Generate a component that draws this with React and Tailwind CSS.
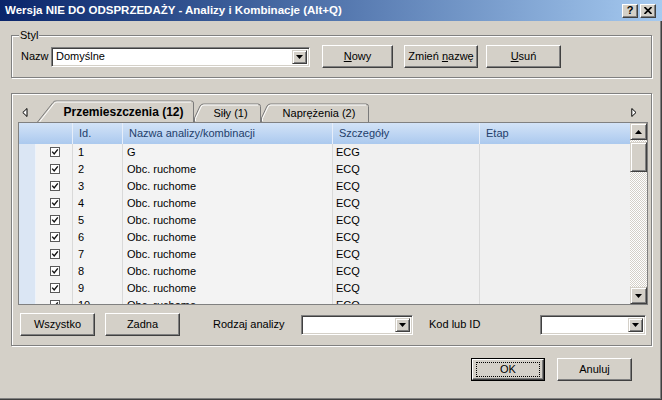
import React from "react";

const F = "font-['Liberation_Sans',Arial,sans-serif]";

function Btn({ children, className = "" }) {
  return (
    <div
      className={`flex items-center justify-center h-[23px] bg-[#d4d0c8] border border-t-white border-l-white border-r-[#404040] border-b-[#404040] shadow-[inset_-1px_-1px_0_#808080] text-[11px] text-black shrink-0 ${className}`}
    >
      {children}
    </div>
  );
}

function DownTri() {
  return (
    <svg width="7" height="4" viewBox="0 0 7 4">
      <path d="M0 0 H7 L3.5 4 Z" fill="#000" />
    </svg>
  );
}

function Combo({ className = "", text = "" }) {
  return (
    <div
      className={`flex items-stretch h-[20px] bg-white border border-t-[#808080] border-l-[#808080] border-r-white border-b-white shadow-[inset_1px_1px_0_#404040,inset_-1px_-1px_0_#d4d0c8] p-[2px] shrink-0 ${className}`}
    >
      <div className="flex-1 flex items-center pl-[2px] text-[11px] text-black whitespace-nowrap overflow-hidden">
        {text}
      </div>
      <div className="w-[15px] flex items-center justify-center bg-[#d4d0c8] border border-t-[#d4d0c8] border-l-[#d4d0c8] border-r-[#404040] border-b-[#404040] shadow-[inset_1px_1px_0_#fff,inset_-1px_-1px_0_#808080]">
        <DownTri />
      </div>
    </div>
  );
}

function TitleBtn({ children, className = "" }) {
  return (
    <div
      className={`w-[16px] h-[14px] flex items-center justify-center bg-[#d4d0c8] border border-t-white border-l-white border-r-[#404040] border-b-[#404040] shadow-[inset_-1px_-1px_0_#808080] ${className}`}
    >
      {children}
    </div>
  );
}

function Check() {
  return (
    <svg width="10" height="10" viewBox="0 0 10 10">
      <rect x="0.5" y="0.5" width="9" height="9" fill="#fff" stroke="#5a5a5a" />
      <path d="M2.2 4.6 L4.2 7 L7.8 2.4" fill="none" stroke="#111" strokeWidth="1.4" />
    </svg>
  );
}

const rows = [
  ["1", "G", "ECG"],
  ["2", "Obc. ruchome", "ECQ"],
  ["3", "Obc. ruchome", "ECQ"],
  ["4", "Obc. ruchome", "ECQ"],
  ["5", "Obc. ruchome", "ECQ"],
  ["6", "Obc. ruchome", "ECQ"],
  ["7", "Obc. ruchome", "ECQ"],
  ["8", "Obc. ruchome", "ECQ"],
  ["9", "Obc. ruchome", "ECQ"],
  ["10", "Obc. ruchome", "ECQ"],
];

const COLS = "grid grid-cols-[17px_37px_50px_210px_147px_150px]";

function Table() {
  return (
    <div className="ml-[6px] w-[630px] h-[183px] border border-[#808080] flex bg-white">
      <div className="w-[611px] flex flex-col overflow-hidden">
        <div className={`${COLS} h-[21px] shrink-0 bg-linear-to-b from-[#d3e3f7] to-[#abc9ee] text-[#23406b] text-[11px]`}>
          <div />
          <div className="border-r border-[#e6eefa]" />
          <div className="border-r border-[#e6eefa] flex items-center pl-[6px]">Id.</div>
          <div className="border-r border-[#e6eefa] flex items-center pl-[6px]">Nazwa analizy/kombinacji</div>
          <div className="border-r border-[#e6eefa] flex items-center pl-[6px]">Szczegóły</div>
          <div className="flex items-center pl-[6px]">Etap</div>
        </div>
        {rows.map((r) => (
          <div key={r[0]} className={`${COLS} h-[17px] shrink-0 text-[11px] text-black`}>
            <div className="bg-[#dbe6f4] border-b border-[#c7d6ea] border-r border-r-[#eef3fa]" />
            <div className="bg-[#f3f3f3] border-b border-[#d4d4d4] border-r border-r-[#d9d9d9] flex items-center justify-center pl-[1px]">
              <Check />
            </div>
            <div className="bg-[#f3f3f3] border-b border-[#d4d4d4] border-r border-r-[#d9d9d9] flex items-center pl-[5px]">{r[0]}</div>
            <div className="bg-[#f3f3f3] border-b border-[#d4d4d4] border-r border-r-[#d9d9d9] flex items-center pl-[4px] whitespace-nowrap">{r[1]}</div>
            <div className="bg-[#f0f0f0] border-b border-[#d4d4d4] border-r border-r-[#d9d9d9] flex items-center pl-[3px]">{r[2]}</div>
            <div className="bg-[#f0f0f0] border-b border-[#d4d4d4]" />
          </div>
        ))}
      </div>
      <div className="w-[17px] flex flex-col bg-[repeating-conic-gradient(#d4d0c8_0_25%,#ffffff_0_50%)] bg-[length:2px_2px]">
        <div className="h-[17px] shrink-0 flex items-center justify-center bg-[#d4d0c8] border border-t-[#d4d0c8] border-l-[#d4d0c8] border-r-[#404040] border-b-[#404040] shadow-[inset_1px_1px_0_#fff,inset_-1px_-1px_0_#808080]">
          <svg width="7" height="4" viewBox="0 0 7 4">
            <path d="M0 4 H7 L3.5 0 Z" fill="#000" />
          </svg>
        </div>
        <div className="mt-[2px] h-[30px] shrink-0 bg-[#d4d0c8] border border-t-[#d4d0c8] border-l-[#d4d0c8] border-r-[#404040] border-b-[#404040] shadow-[inset_1px_1px_0_#fff,inset_-1px_-1px_0_#808080]" />
        <div className="flex-1" />
        <div className="h-[17px] shrink-0 flex items-center justify-center bg-[#d4d0c8] border border-t-[#d4d0c8] border-l-[#d4d0c8] border-r-[#404040] border-b-[#404040] shadow-[inset_1px_1px_0_#fff,inset_-1px_-1px_0_#808080]">
          <DownTri />
        </div>
      </div>
    </div>
  );
}

function Tabs() {
  return (
    <div className="flex h-[22px] items-stretch">
      <div className="w-[25px] flex items-center pl-[10px] pt-[2px]">
        <svg width="6" height="9" viewBox="0 0 6 9">
          <path d="M5 0.5 L0.8 4.5 L5 8.5 Z" fill="#fff" stroke="#000" />
        </svg>
      </div>
      <div className="w-[157px] grid">
        <svg className="[grid-area:1/1]" width="157" height="22" viewBox="0 0 157 22">
          <path d="M0.5 22 L16 2.5 Q17 1 19 1 H154.5 Q156.5 1 156.5 3 V22" fill="#d4d0c8" stroke="#7a7a7a" />
          <path d="M2.5 22 L17 3.5 Q18 2 20 2 H154" fill="none" stroke="#fff" />
        </svg>
        <div className="[grid-area:1/1] flex items-center justify-center pl-[16px] pt-[2px] font-bold text-[12px] whitespace-nowrap">
          Przemieszczenia (12)
        </div>
      </div>
      <div className="w-[67px] grid">
        <svg className="[grid-area:1/1]" width="67" height="22" viewBox="0 0 67 22">
          <path d="M0.5 22 V18 L6 6 Q7 4 9.5 4 H64 Q66.5 4 66.5 6.5 V22" fill="#d4d0c8" stroke="#7a7a7a" />
          <path d="M1.5 21 V18.5 L7 7 Q8 5 10 5 H64" fill="none" stroke="#fff" />
        </svg>
        <div className="[grid-area:1/1] flex items-center justify-center pl-[6px] pt-[4px] text-[11px] whitespace-nowrap">
          Siły (1)
        </div>
      </div>
      <div className="w-[108px] grid">
        <svg className="[grid-area:1/1]" width="108" height="22" viewBox="0 0 108 22">
          <path d="M0.5 22 V18 L6 6 Q7 4 9.5 4 H105 Q107.5 4 107.5 6.5 V22" fill="#d4d0c8" stroke="#7a7a7a" />
          <path d="M1.5 21 V18.5 L7 7 Q8 5 10 5 H105" fill="none" stroke="#fff" />
        </svg>
        <div className="[grid-area:1/1] flex items-center justify-center pl-[8px] pt-[4px] text-[11px] whitespace-nowrap">
          Naprężenia (2)
        </div>
      </div>
      <div className="flex-1" />
      <div className="w-[20px] flex items-center pt-[2px]">
        <svg width="6" height="9" viewBox="0 0 6 9">
          <path d="M0.8 0.5 L5 4.5 L0.8 8.5 Z" fill="#fff" stroke="#000" />
        </svg>
      </div>
    </div>
  );
}

export default function App() {
  return (
    <div
      className={`w-[662px] h-[400px] bg-[#d4d0c8] flex flex-col ${F} text-[11px] text-black overflow-hidden shadow-[inset_-1px_-1px_0_#404040,inset_-2px_-2px_0_#808080]`}
    >
      <div className="h-[21px] shrink-0 flex items-center pl-[5px] pr-[6px] bg-linear-to-r from-[#0a246a] to-[#a6caf0]">
        <span className="flex-1 text-white font-bold text-[11.5px] whitespace-nowrap">
          Wersja NIE DO ODSPRZEDAŻY - Analizy i Kombinacje (Alt+Q)
        </span>
        <TitleBtn>
          <span className="font-bold text-[11px] leading-none">?</span>
        </TitleBtn>
        <TitleBtn className="ml-[2px]">
          <svg width="8" height="7" viewBox="0 0 8 7">
            <path d="M0.5 0 L7.5 7 M7.5 0 L0.5 7" stroke="#000" strokeWidth="1.7" />
          </svg>
        </TitleBtn>
      </div>

      <fieldset className="mt-[8px] ml-[11px] w-[641px] h-[49px] border border-[#808080] shadow-[inset_1px_1px_0_#fff,1px_1px_0_#fff] shrink-0">
        <legend className="ml-[7px] px-[1px] leading-[13px] bg-[#d4d0c8]">Styl</legend>
        <div className="flex items-center mt-[3px] pl-[9px]">
          <div className="w-[30px] whitespace-nowrap overflow-hidden">Nazw</div>
          <Combo className="w-[259px]" text="Domyślne" />
          <Btn className="ml-[12px] w-[71px]">
            <span><span className="underline">N</span>owy</span>
          </Btn>
          <Btn className="ml-[11px] w-[74px]">
            <span>Zmień <span className="underline">n</span>azwę</span>
          </Btn>
          <Btn className="ml-[8px] w-[75px]">
            <span><span className="underline">U</span>suń</span>
          </Btn>
        </div>
      </fieldset>

      <div className="mt-[15px] ml-[11px] w-[641px] border border-[#808080] shadow-[inset_1px_1px_0_#fff,1px_1px_0_#fff] pt-[6px] pb-[9px] shrink-0">
        <Tabs />
        <Table />
        <div className="flex items-center mt-[8px] h-[23px]">
          <Btn className="ml-[8px] w-[75px]">Wszystko</Btn>
          <Btn className="ml-[10px] w-[75px]">Zadna</Btn>
          <div className="ml-[33px] w-[88px] whitespace-nowrap">Rodzaj analizy</div>
          <Combo className="w-[112px]" />
          <div className="ml-[16px] w-[111px] whitespace-nowrap">Kod lub ID</div>
          <Combo className="w-[106px]" />
        </div>
      </div>

      <div className="flex justify-end pr-[30px] mt-[12px]">
        <div className="w-[74px] h-[23px] border border-black flex">
          <div className="flex-1 flex items-center justify-center bg-[#d4d0c8] border border-t-white border-l-white border-r-[#404040] border-b-[#404040] shadow-[inset_-1px_-1px_0_#808080]">
            <div className="w-[64px] h-[15px] border border-dotted border-black flex items-center justify-center">OK</div>
          </div>
        </div>
        <Btn className="ml-[12px] w-[75px]">Anuluj</Btn>
      </div>
    </div>
  );
}
